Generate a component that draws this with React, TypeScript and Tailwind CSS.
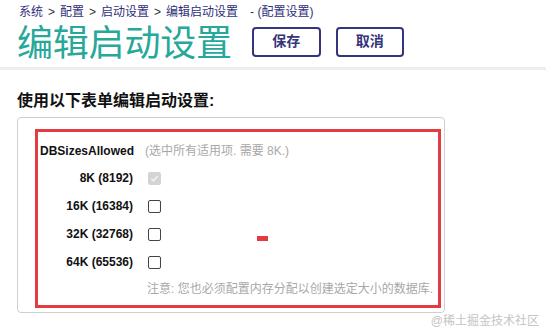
const font = { fontFamily: '"Liberation Sans", "Noto Sans CJK SC", sans-serif' }

const sizes = [
  { label: "8K (8192)", locked: true },
  { label: "16K (16384)" },
  { label: "32K (32768)" },
  { label: "64K (65536)" },
]

function Check({ locked }: { locked?: boolean }) {
  if (locked) {
    return (
      <span className="flex h-[13px] w-[13px] items-center justify-center rounded-[2px] bg-[#d4d4d4]">
        <svg width="9" height="9" viewBox="0 0 10 10" fill="none">
          <path d="M1.5 5.2l2.3 2.3L8.5 2.5" stroke="#f5f5f5" strokeWidth="1.6" />
        </svg>
      </span>
    )
  }
  return <span className="block h-[13px] w-[13px] rounded-[2px] border border-[#444] bg-white" />
}

export default function App() {
  return (
    <div className="relative h-[334px] w-[546px] overflow-hidden bg-white" style={font}>
      <header className="border-b-[3px] border-[#eeeeee] px-[17px] pb-[1px]">
        <nav className="flex h-[22px] items-center gap-[5px] pl-[2px] pt-[2px] text-[12px] text-[#2f2f78]">
          <span>系统</span>
          <span className="text-[#333]">&gt;</span>
          <span>配置</span>
          <span className="text-[#333]">&gt;</span>
          <span>启动设置</span>
          <span className="text-[#333]">&gt;</span>
          <span>编辑启动设置</span>
          <span className="ml-[7px]">- (配置设置)</span>
        </nav>
        <div className="flex h-[44px] items-center">
          <h1 className="text-[36px] leading-none tracking-[-0.2px] text-[#26a89a]">编辑启动设置</h1>
          <div className="ml-[20px] flex gap-[15px] pb-[5px]">
            <button
              type="button"
              className="h-[30px] w-[69px] rounded-[4px] border-2 border-[#35357c] text-[14px] font-bold text-[#35357c]"
            >
              保存
            </button>
            <button
              type="button"
              className="h-[30px] w-[68px] rounded-[4px] border-2 border-[#35357c] text-[14px] font-bold text-[#35357c]"
            >
              取消
            </button>
          </div>
        </div>
      </header>

      <main className="px-[17px] pt-[21px]">
        <h2 className="text-[16px] font-bold leading-[20px] text-[#111]">使用以下表单编辑启动设置:</h2>
        <div className="mt-[6px] w-[428px] rounded-[4px] border border-[#cfcfcf] pb-[4px] pl-[17px] pr-[3px] pt-[11px]">
          <div className="relative h-[179px] border-[3px] border-[#e23c41] pl-[2px] pt-[10px]">
            <div className="flex items-center text-[12px] leading-[18px]">
              <span className="font-bold text-[#111]">DBSizesAllowed</span>
              <span className="ml-[11px] text-[#a8a8a8]">(选中所有适用项. 需要 8K.)</span>
            </div>
            <div className="mt-[9px] flex flex-col gap-[10px]">
              {sizes.map((s) => (
                <div key={s.label} className="flex h-[18px] items-center">
                  <span className="w-[93px] text-right text-[12px] font-bold text-[#111]">{s.label}</span>
                  <span className="ml-[15px]">
                    <Check locked={s.locked} />
                  </span>
                </div>
              ))}
            </div>
            <p className="mt-[9px] pl-[107px] text-[12px] leading-[18px] text-[#a8a8a8]">
              注意: 您也必须配置内存分配以创建选定大小的数据库.
            </p>
            <span className="absolute left-[219px] top-[104px] h-[5px] w-[11px] bg-[#e23c41]" />
          </div>
        </div>
      </main>

      <span className="absolute bottom-[4px] right-[7px] text-[12px] text-[#c4c4c4]">@稀土掘金技术社区</span>
    </div>
  )
}
